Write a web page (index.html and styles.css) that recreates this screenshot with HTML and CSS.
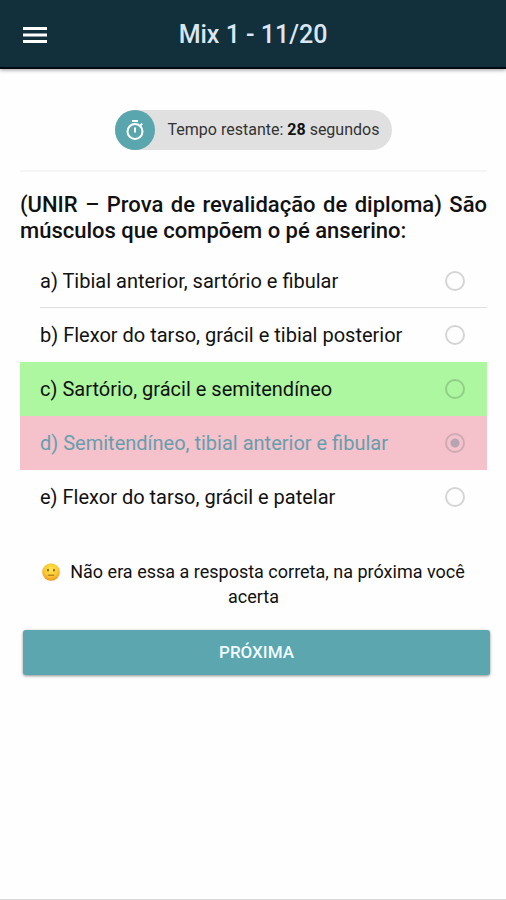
FILE: index.html
```html
<!DOCTYPE html>
<html lang="pt-BR">
<head>
<meta charset="utf-8">
<meta name="viewport" content="width=device-width, initial-scale=1">
<title>Mix 1 - 11/20</title>
<link rel="stylesheet" href="styles.css">
</head>
<body>
<header class="toolbar">
  <button class="menu" type="button" aria-label="Menu">
    <svg viewBox="0 0 24 18" width="24" height="18" aria-hidden="true">
      <path d="M0 2.5h24M0 9h24M0 15.5h24" stroke="#fff" stroke-width="3.2"/>
    </svg>
  </button>
  <h1 class="title">Mix 1 - 11/20</h1>
</header>
<main class="content">
  <div class="timer">
    <span class="timer-icon">
      <svg viewBox="0 0 24 24" width="24" height="24" fill="none" stroke="#fff" stroke-width="2" aria-hidden="true">
        <circle cx="12" cy="13.5" r="7.5"/>
        <path d="M9 3h6M12 9.5v5M17.6 7.2l1.6-1.6"/>
      </svg>
    </span>
    <span class="timer-text">Tempo restante: <b>28</b> segundos</span>
  </div>
  <form class="quiz">
    <fieldset class="options">
      <legend class="question">(UNIR – Prova de revalidação de diploma) São músculos que compõem o pé anserino:</legend>
      <label class="option"><span class="answer">a) Tibial anterior, sartório e fibular</span><input class="radio" type="radio" name="answer"></label>
      <label class="option"><span class="answer">b) Flexor do tarso, grácil e tibial posterior</span><input class="radio" type="radio" name="answer"></label>
      <label class="option right"><span class="answer">c) Sartório, grácil e semitendíneo</span><input class="radio" type="radio" name="answer"></label>
      <label class="option wrong"><span class="answer">d) Semitendíneo, tibial anterior e fibular</span><input class="radio" type="radio" name="answer" checked></label>
      <label class="option"><span class="answer">e) Flexor do tarso, grácil e patelar</span><input class="radio" type="radio" name="answer"></label>
    </fieldset>
    <p class="feedback"><svg class="face" viewBox="0 0 18 18" width="18" height="18" aria-hidden="true">
        <defs>
          <radialGradient id="skin" cx="50%" cy="35%" r="65%">
            <stop offset="0" stop-color="#ffe64d"/>
            <stop offset="0.6" stop-color="#fcc833"/>
            <stop offset="1" stop-color="#ee9420"/>
          </radialGradient>
        </defs>
        <circle cx="9" cy="9" r="8.8" fill="url(#skin)"/>
        <ellipse cx="6" cy="7.2" rx="0.9" ry="1.4" fill="#8a611c"/>
        <ellipse cx="12" cy="7.2" rx="0.9" ry="1.4" fill="#8a611c"/>
        <path d="M5.8 12.2h6.4" fill="none" stroke="#946a20" stroke-width="1"/>
      </svg>Não era essa a resposta correta, na próxima você acerta</p>
    <button class="next" type="button">PRÓXIMA</button>
  </form>
</main>
</body>
</html>
```

FILE: styles.css
```css
* {
  box-sizing: border-box;
}

body {
  display: flex;
  flex-direction: column;
  min-height: 100vh;
  margin: 0;
  border-bottom: 1px solid #d8d8d8;
  background: #fefefe;
  color: #111;
  font-family: Roboto, "Liberation Sans", sans-serif;
  font-size: 20px;
}

.toolbar {
  display: grid;
  grid-template-columns: 48px 1fr 48px;
  align-items: center;
  padding: 13px 12px 10px;
  border-bottom: 2px solid #020a10;
  background: #11303c;
  box-shadow: 0 1px 4px rgba(0, 0, 0, 0.4);
}

.menu {
  display: flex;
  padding: 12px 11px;
  border: 0;
  background: none;
}

.title {
  margin: 0;
  color: #dbe6f4;
  font-size: 25px;
  font-weight: 500;
  line-height: 44px;
  text-align: center;
}

.content {
  padding: 41px 19px 20px 20px;
}

.timer {
  display: flex;
  align-items: center;
  width: fit-content;
  margin: 0 auto;
  border-radius: 20px;
  background: #e0e0e0;
}

.timer-icon {
  display: flex;
  padding: 8px;
  border-radius: 50%;
  background: #59a6af;
}

.timer-text {
  padding: 0 13px 2px;
  color: #333;
  font-size: 16px;
}

.timer b {
  color: #111;
}

.quiz {
  margin-top: 20px;
  padding-top: 20px;
  border-top: 2px solid #f5f5f5;
}

.options {
  min-width: 0;
  margin: 0;
  padding: 0;
  border: 0;
}

.question {
  padding: 0 0 10px;
  font-size: 22px;
  font-weight: 500;
  line-height: 26px;
  text-align: justify;
}

.option {
  display: flex;
  align-items: center;
  padding-left: 20px;
}

.answer {
  flex: 1;
  line-height: 54px;
}

.radio {
  appearance: none;
  width: 20px;
  height: 20px;
  margin: 0 22px 0 0;
  border: 2px solid rgba(0, 0, 0, 0.16);
  border-radius: 50%;
}

.option:first-of-type {
  background: linear-gradient(#dedede, #dedede) 20px 100% / 100% 1px no-repeat;
}

.right {
  background: #adf7a0;
}

.wrong {
  background: #f5c1cb;
  color: #659fad;
}

.radio:checked {
  border-color: #ceabb5;
  background: radial-gradient(circle, #b6a4b0 0 4px, transparent 5px);
}

.feedback {
  margin: 35px 0 21px;
  padding: 0 10px;
  font-size: 18px;
  line-height: 25px;
  text-align: center;
}

.face {
  margin-right: 10px;
  vertical-align: -3px;
}

.next {
  display: block;
  width: 100%;
  margin-left: 3px;
  padding: 0;
  border: 0;
  border-radius: 3px;
  background: #5ba6af;
  box-shadow: 0 1px 3px rgba(0, 0, 0, 0.45);
  color: #f0fbff;
  font-family: inherit;
  font-size: 17px;
  font-weight: 500;
  line-height: 45px;
}
```
